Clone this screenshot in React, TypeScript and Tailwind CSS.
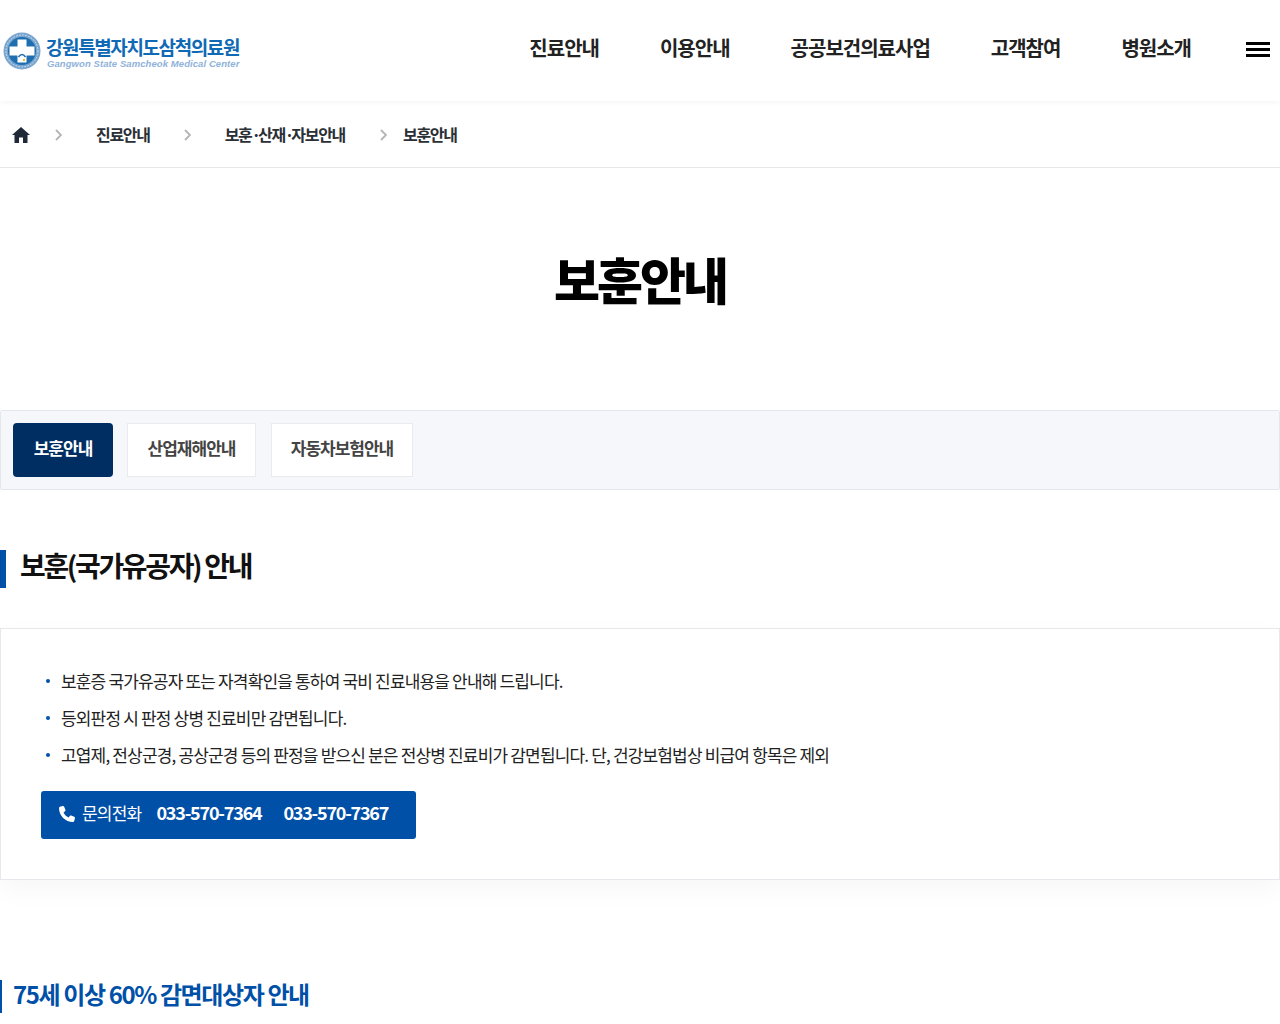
const KR = "font-['Noto_Sans_CJK_KR','Noto_Sans',sans-serif]";

function Logo() {
  return (
    <div className="flex items-start mt-[4px]">
      <svg width="38" height="38" viewBox="0 0 38 38" className="ml-[3px] shrink-0">
        <circle cx="19" cy="19" r="18.5" fill="#7ba6cf" />
        <circle cx="19" cy="19" r="14" fill="#1f6fb0" />
        <circle cx="19" cy="19" r="16" fill="none" stroke="#dbe8f3" strokeWidth="1" strokeDasharray="1.500 1.500" />
        <path d="M14.500 7.500h9v7h8v9h-8v7h-9v-7H6.500v-9h8z" fill="#ffffff" />
        <path d="M15.500 25q3.500-5 7 0" stroke="#1f6fb0" strokeWidth="1.500" fill="none" />
        <circle cx="21" cy="28" r="1.200" fill="#e8c23a" />
      </svg>
      <div className="ml-[5px] flex flex-col">
        <div className="text-[19px] leading-[22px] mt-[4px] font-bold tracking-[-1.4px] text-[#0f69b4] whitespace-nowrap">강원특별자치도삼척의료원</div>
        <div className="font-['Liberation_Sans',sans-serif] text-[9.5px] leading-[11px] italic font-bold tracking-[0.08px] text-[#8fb2da] whitespace-nowrap ml-[1px]">Gangwon State Samcheok Medical Center</div>
      </div>
    </div>
  );
}

function HomeIcon() {
  return (
    <svg width="18" height="16" viewBox="0 0 18 16" className="shrink-0 mt-[2px]">
      <path d="M9 0 L18 8 L15.500 8 L15.500 16 L11 16 L11 10.500 L7 10.500 L7 16 L2.500 16 L2.500 8 L0 8 Z" fill="#1f2937" />
    </svg>
  );
}

function Chevron() {
  return (
    <svg width="7" height="12" viewBox="0 0 7 12" className="shrink-0 block mt-[2px]">
      <path d="M1 1l5 5-5 5" fill="none" stroke="#b5b5b5" strokeWidth="1.800" />
    </svg>
  );
}

function PhoneIcon() {
  return (
    <svg width="16" height="16" viewBox="0 0 512 512" className="shrink-0 mt-[3px]">
      <path fill="#ffffff" d="M164.900 24.600c-7.700-18.600-28-28.500-47.400-23.200l-88 24C12.100 30.200 0 46 0 64C0 311.400 200.600 512 448 512c18 0 33.800-12.100 38.600-29.500l24-88c5.300-19.400-4.600-39.700-23.200-47.400l-96-40c-16.300-6.800-35.200-2.100-46.300 11.600L304.700 368C234.300 334.700 177.300 277.700 144 207.300L193.300 167c13.700-11.200 18.400-30 11.600-46.300l-40-96z" />
    </svg>
  );
}

const nav = ["진료안내", "이용안내", "공공보건의료사업", "고객참여", "병원소개"];
const items = [
  "보훈증 국가유공자 또는 자격확인을 통하여 국비 진료내용을 안내해 드립니다.",
  "등외판정 시 판정 상병 진료비만 감면됩니다.",
  "고엽제, 전상군경, 공상군경 등의 판정을 받으신 분은 전상병 진료비가 감면됩니다. 단, 건강보험법상 비급여 항목은 제외",
];

export default function App() {
  return (
    <div className={`${KR} bg-white w-[1280px] h-[1024px] overflow-hidden`}>
      <header className="h-[101px] flex items-center justify-between shadow-[0_1px_6px_rgba(0,0,0,0.05)] pb-[3px]">
        <Logo />
        <div className="flex items-center">
          <nav className="flex gap-[61px] text-[20px] font-bold tracking-[-1px] text-[#222222] -mt-[3px]">
            {nav.map((n) => <span key={n}>{n}</span>)}
          </nav>
          <div className="ml-[55px] mr-[10px] w-[24px] flex flex-col gap-[3px]">
            <div className="h-[3px] bg-black" />
            <div className="h-[3px] bg-black" />
            <div className="h-[3px] bg-black" />
          </div>
        </div>
      </header>

      <div className="h-[67px] border-b border-[#e8e8e8] flex items-center pl-[12px] text-[16px] font-bold tracking-[-1.3px] text-[#2b2f36]">
        <HomeIcon />
        <span className="ml-[25px]"><Chevron /></span>
        <span className="ml-[34px]">진료안내</span>
        <span className="ml-[34px]"><Chevron /></span>
        <span className="ml-[34px]">보훈<span className="tracking-[-3px]">·</span>산재<span className="tracking-[-3px]">·</span>자보안내</span>
        <span className="ml-[35px]"><Chevron /></span>
        <span className="ml-[16px]">보훈안내</span>
      </div>

      <h1 className="h-[242px] pt-[70px] text-center text-[50px] leading-[80px] font-black tracking-[-3px] text-black">보훈안내</h1>

      <div className="h-[80px] bg-[#f5f7fa] border border-[#e3e6eb] rounded-[2px] flex items-center pl-[12px]">
        <div className="w-[100px] h-[54px] rounded-[4px] bg-[#002e63] text-white flex items-center justify-center text-[17px] font-bold tracking-[-1px] pb-[4px]">보훈안내</div>
        <div className="ml-[14px] w-[129px] h-[54px] bg-white border border-[#e9ebef] text-[#444444] flex items-center justify-center text-[17px] font-bold tracking-[-1px] pb-[4px]">산업재해안내</div>
        <div className="ml-[15px] w-[142px] h-[54px] bg-white border border-[#e9ebef] text-[#444444] flex items-center justify-center text-[17px] font-bold tracking-[-1px] pb-[4px]">자동차보험안내</div>
      </div>

      <h2 className="mt-[60px] h-[38px] border-l-[6px] border-[#0050a8] pl-[14px] text-[28px] leading-[31px] font-bold tracking-[-2.35px] text-[#111111]">보훈(국가유공자) 안내</h2>

      <section className="mt-[40px] h-[252px] border border-[#e6e8ec] shadow-[0_10px_25px_rgba(0,0,0,0.035)] pt-[38px] pl-[40px]">
        <ul className="flex flex-col gap-[9px] text-[17px] leading-[28px] tracking-[-0.83px] text-[#222222]">
          {items.map((t) => (
            <li key={t} className="flex items-center">
              <span className="w-[4px] h-[4px] rounded-full bg-[#0050a8] ml-[5px] mr-[11px]" />
              {t}
            </li>
          ))}
        </ul>
        <div className="mt-[22px] w-[375px] h-[48px] rounded-[3px] bg-[#0050a8] text-white flex items-center pl-[18px] pb-[5px]">
          <PhoneIcon />
          <span className="ml-[7px] text-[17px] tracking-[-0.8px]">문의전화</span>
          <span className="ml-[15px] text-[18px] font-bold tracking-[-1.2px]">033-570-7364</span>
          <span className="ml-[22px] text-[18px] font-bold tracking-[-1.25px]">033-570-7367</span>
        </div>
      </section>

      <h3 className="mt-[100px] h-[33px] border-l-[2px] border-[#0050a8] pl-[11px] text-[24px] leading-[27px] font-bold tracking-[-1.4px] text-[#0050a8]">75세 이상 60% 감면대상자 안내</h3>
    </div>
  );
}
